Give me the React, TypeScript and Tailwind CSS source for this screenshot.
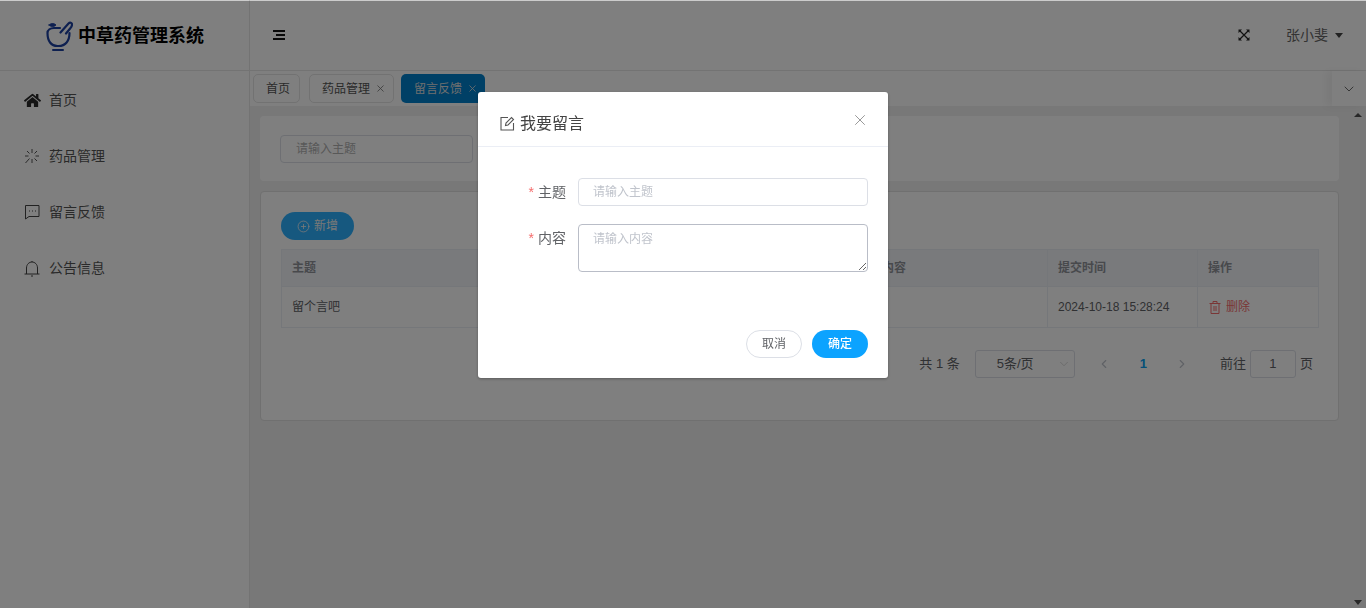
import { FaHome } from "react-icons/fa";
import { ChevronDown, ChevronLeft, ChevronRight, CirclePlus, X } from "lucide-react";

const sans = "font-['Liberation_Sans','Noto_Sans_CJK_SC',sans-serif]";

const LogoIcon = () => (
  <svg width="28" height="32" viewBox="0 0 28 32" fill="none" stroke="#1d40a0" strokeWidth="2.200" strokeLinecap="round">
    <path d="M2.500 13c0-3 3-5 6.500-5h6M24.500 13c0 8-4 13-11 13h-1C6 26 2.500 21 2.500 13" />
    <path d="M15.500 12.500 23.500 3.500c1.500-1.500 3.500-.8 3.500 1s-.5 2.500-1.500 3.500L21 13.500" />
    <path d="M8 30h10" strokeWidth="2" />
    <path d="M4 5c2-2 5-2 7 0-2 2-5 2-7 0z" fill="#1d40a0" strokeWidth="1" />
  </svg>
);

const SpinnerIcon = () => (
  <svg width="16" height="16" viewBox="0 0 16 16" stroke="#555" strokeWidth="1" fill="none">
    <path d="M8 1v4M8 11v4M1 8h3.500M11.500 8H15M3 3l2.500 2.500M10.500 10.500 13 13M13 3l-2.500 2.500M5.500 10.500 1.500 15" />
  </svg>
);

const ChatIcon = () => (
  <svg width="16" height="16" viewBox="0 0 16 16" stroke="#444" strokeWidth="1" fill="none">
    <path d="M1.500 1.500h13.500v11H5l-3.500 2.500z" />
    <path d="M5 7h1M8 7h1M11 7h1" />
  </svg>
);

const BellIcon = () => (
  <svg width="16" height="17" viewBox="0 0 16 17" stroke="#444" strokeWidth="1" fill="none">
    <path d="M.5 14h15M2.500 14V8c0-3.500 2.500-6 5.500-6s5.500 2.500 5.500 6v6M8 1v1M7 16h2" />
  </svg>
);

const EditIcon = () => (
  <svg width="15" height="15" viewBox="0 0 15 15" stroke="#555" strokeWidth="1.100" fill="none">
    <path d="M8 1.500H1v12.500h12.500V7" />
    <path d="M5.500 9.500 6 7l5.500-5.500 2 2L8 9z" />
  </svg>
);

const TrashIcon = () => (
  <svg width="12" height="13" viewBox="0 0 12 13" stroke="#f56c6c" strokeWidth="1" fill="none" className="ml-px">
    <path d="M.5 2.500h11M4 2.500V.5h4v2M2 2.500v10h8v-10M5 5v5M7 5v5" />
  </svg>
);

const FoldIcon = () => (
  <svg width="14" height="12" viewBox="0 0 14 12" stroke="#111" strokeWidth="2" fill="none">
    <path d="M1 2h12M4 6h9M1 10h12" />
  </svg>
);

const ExpandIcon = () => (
  <svg width="12" height="12" viewBox="0 0 12 12" stroke="#222" strokeWidth="1.200" fill="#222">
    <path d="M2 2l8 8M10 2l-8 8" />
    <path d="M.5.5h3.500L.5 4zM11.500.5H8l3.500 3.500zM.5 11.500H4L.5 8zM11.500 11.500H8L11.500 8z" stroke="none" />
  </svg>
);

const menus = [
  { name: "首页", icon: <FaHome size={17} color="#2b2b2b" /> },
  { name: "药品管理", icon: <SpinnerIcon /> },
  { name: "留言反馈", icon: <ChatIcon /> },
  { name: "公告信息", icon: <BellIcon /> },
];

const Sidebar = () => (
  <aside className="w-[250px] shrink-0 border-r border-[#e6e6e6] bg-white">
    <div className="flex h-[71px] items-center justify-center gap-[5px] border-b border-[#e6e6e6] pt-[2px]">
      <LogoIcon />
      <span className="text-[18px] leading-[24px] font-bold text-black">中草药管理系统</span>
    </div>
    <nav className="pt-px">
      {menus.map((m) => (
        <div key={m.name} className="flex h-[56px] items-center pl-6 text-sm text-[#555]">
          <span className="flex w-[25px] items-center">{m.icon}</span>
          {m.name}
        </div>
      ))}
    </nav>
  </aside>
);

const Tab = ({ label, active, closable, className }: any) => (
  <div
    className={
      (active
        ? "flex h-[29px] items-center gap-[5px] rounded-[5px] bg-[#0080cc] pr-[7px] pl-[13px] text-xs text-[#ddd] "
        : closable
          ? "flex h-[29px] items-center gap-[5px] rounded-[5px] border border-[#e4e4e4] bg-white pr-[7px] pl-3 text-xs text-[#555] "
          : "flex h-[29px] items-center gap-[5px] rounded-[5px] border border-[#e4e4e4] bg-white pr-[9px] pl-3 text-xs text-[#555] ") + className
    }
  >
    {label}
    {closable && <X size={11} strokeWidth={1.800} className={active ? "text-[#ddd]" : "text-[#777]"} />}
  </div>
);

const Pagination = () => (
  <div className="mt-[22px] flex items-center justify-end pr-[25px] text-[13px] text-[#606266]">
    <span className="mr-[15px]">共 1 条</span>
    <div className="flex h-[28px] w-[100px] items-center justify-center rounded-[3px] border border-[#dcdfe6] pr-[3px] pl-[5px] text-[13px]">
      <span className="ml-[16px] flex-1">5条/页</span>
      <ChevronDown size={14} strokeWidth={1} className="text-[#bbb]" />
    </div>
    <ChevronLeft size={14} strokeWidth={2} className="ml-[22px] text-[#c0c4cc]" />
    <span className="mr-[28px] ml-[29px] font-bold text-[#0aa0f0]">1</span>
    <ChevronRight size={14} strokeWidth={2} className="text-[#c0c4cc]" />
    <span className="mr-[4px] ml-[31px]">前往</span>
    <div className="flex h-[28px] w-[46px] items-center justify-center rounded-[3px] border border-[#dcdfe6]">1</div>
    <span className="ml-[4px]">页</span>
  </div>
);

const Table = () => (
  <table className="w-[1037px] table-fixed border-collapse text-xs text-[#555]">
    <colgroup>
      <col className="w-[293px]" />
      <col className="w-[293px]" />
      <col className="w-[180px]" />
      <col className="w-[150px]" />
      <col className="w-[121px]" />
    </colgroup>
    <thead>
      <tr className="h-[37px] bg-[#f2f4f9] text-left text-[#909399]">
        <th className="border border-[#ebeef5] pl-[10px] font-bold">主题</th>
        <th className="border border-[#ebeef5]"></th>
        <th className="border border-[#ebeef5] pl-[14px] font-bold">内容</th>
        <th className="border border-[#ebeef5] pl-[10px] font-bold">提交时间</th>
        <th className="border border-[#ebeef5] pl-[10px] font-bold">操作</th>
      </tr>
    </thead>
    <tbody>
      <tr className="h-[41px] text-[#606266]">
        <td className="border border-[#ebeef5] pl-[10px]">留个言吧</td>
        <td className="border border-[#ebeef5]"></td>
        <td className="border border-[#ebeef5]"></td>
        <td className="border border-[#ebeef5] pl-[10px]">2024-10-18 15:28:24</td>
        <td className="border border-[#ebeef5] pl-[10px]">
          <span className="flex items-center gap-[5px] text-[#f56c6c]">
            <TrashIcon />
            删除
          </span>
        </td>
      </tr>
    </tbody>
  </table>
);

const Main = () => (
  <main className="min-w-0 flex-1 bg-[#f0f0f0]">
    <header className="flex h-[70px] items-center justify-between bg-white pr-[23px] pl-[22px]">
      <FoldIcon />
      <div className="flex items-center text-sm text-[#666]">
        <ExpandIcon />
        <span className="ml-[36px]">张小斐</span>
        <span className="mt-[1px] ml-[7px] h-0 w-0 border-x-[4px] border-t-[5px] border-x-transparent border-t-[#444]" />
      </div>
    </header>
    <div className="flex h-[36px] items-center border-t border-[#e6e6e6] bg-white pl-[3px]">
      <Tab label="首页" className="mr-[9px]" />
      <Tab label="药品管理" closable className="mr-[7px]" />
      <Tab label="留言反馈" active closable />
      <div className="ml-auto flex h-full w-[34px] items-center justify-center bg-white shadow-[-6px_0_8px_rgba(0,0,0,0.05)]">
        <ChevronDown size={16} strokeWidth={1.300} className="text-[#555]" />
      </div>
    </div>
    <div className="flex">
      <div className="w-[1099px] pt-[10px] pl-[10px]">
        <section className="flex h-[65px] w-[1079px] items-center rounded-[4px] bg-white pl-[20px]">
          <div className="flex h-[28px] w-[193px] items-center rounded-[4px] border border-[#dcdfe6] pl-[15px] text-xs text-[#b0b0b0]">请输入主题</div>
        </section>
        <section className="mt-[10px] h-[230px] w-[1079px] rounded-[4px] border border-[#e0e0e0] bg-white pt-[20px] pl-[20px]">
          <button className="mb-[9px] flex h-[28px] w-[73px] items-center justify-center gap-[4px] rounded-full bg-[#2cb0ff] text-xs text-[#f0f0f0]">
            <CirclePlus size={13} strokeWidth={1.500} />
            新增
          </button>
          <Table />
          <Pagination />
        </section>
      </div>
      <div className="relative ml-auto h-[502px] w-[17px]">
        <span className="absolute top-[7px] left-[5px] h-0 w-0 border-x-[4px] border-b-[4px] border-x-transparent border-b-[#505050]" />
        <span className="absolute bottom-[3px] left-[5px] h-0 w-0 border-x-[4px] border-t-[5px] border-x-transparent border-t-[#505050]" />
      </div>
    </div>
  </main>
);

const Dialog = () => (
  <>
    <div className="fixed inset-x-0 top-0 z-10 h-px bg-black/20" />
    <div className="fixed inset-x-0 top-px bottom-0 z-10 bg-black/50">
      <div className="absolute top-[91px] left-[478px] h-[286px] w-[410px] rounded-[3px] bg-white shadow-[0_1px_3px_rgba(0,0,0,0.3)]">
        <div className="relative flex h-[55px] items-center gap-[5px] border-b border-[#ebeef5] pt-[9px] pl-[22px] text-[#444]">
          <EditIcon />
          <span className="text-base">我要留言</span>
          <X size={18} strokeWidth={1} className="absolute top-[19px] right-[19px] text-[#777]" />
        </div>
        <div className="pt-[31px] pr-[20px] pl-[40px] text-sm text-[#606266]">
          <div className="flex items-center">
            <label className="-mt-px w-[48px] shrink-0 text-right whitespace-nowrap"><span className="mr-1 text-[#f56c6c]">*</span>主题</label>
            <div className="ml-[12px] flex h-[28px] flex-1 items-center rounded-[4px] border border-[#dcdfe6] pl-[14px] text-xs text-[#c0c4cc]">请输入主题</div>
          </div>
          <div className="mt-[18px] flex items-start">
            <label className="w-[48px] shrink-0 pt-[4px] text-right whitespace-nowrap"><span className="mr-1 text-[#f56c6c]">*</span>内容</label>
            <textarea
              placeholder="请输入内容"
              className="ml-[12px] h-[48px] flex-1 rounded-[4px] border border-[#b9bdc7] px-[14px] py-[6px] text-xs outline-none placeholder:text-[#c0c4cc]"
            />
          </div>
        </div>
        <div className="mt-[58px] flex justify-end gap-[10px] pr-[20px] text-xs">
          <button className="h-[28px] w-[56px] rounded-full border border-[#dcdfe6] text-[#606266]">取消</button>
          <button className="h-[28px] w-[56px] rounded-full bg-[#0ca3ff] font-medium text-white">确定</button>
        </div>
      </div>
    </div>
  </>
);

export default function App() {
  return (
    <div className={`flex h-screen overflow-hidden bg-white ${sans}`}>
      <Sidebar />
      <Main />
      <Dialog />
    </div>
  );
}
